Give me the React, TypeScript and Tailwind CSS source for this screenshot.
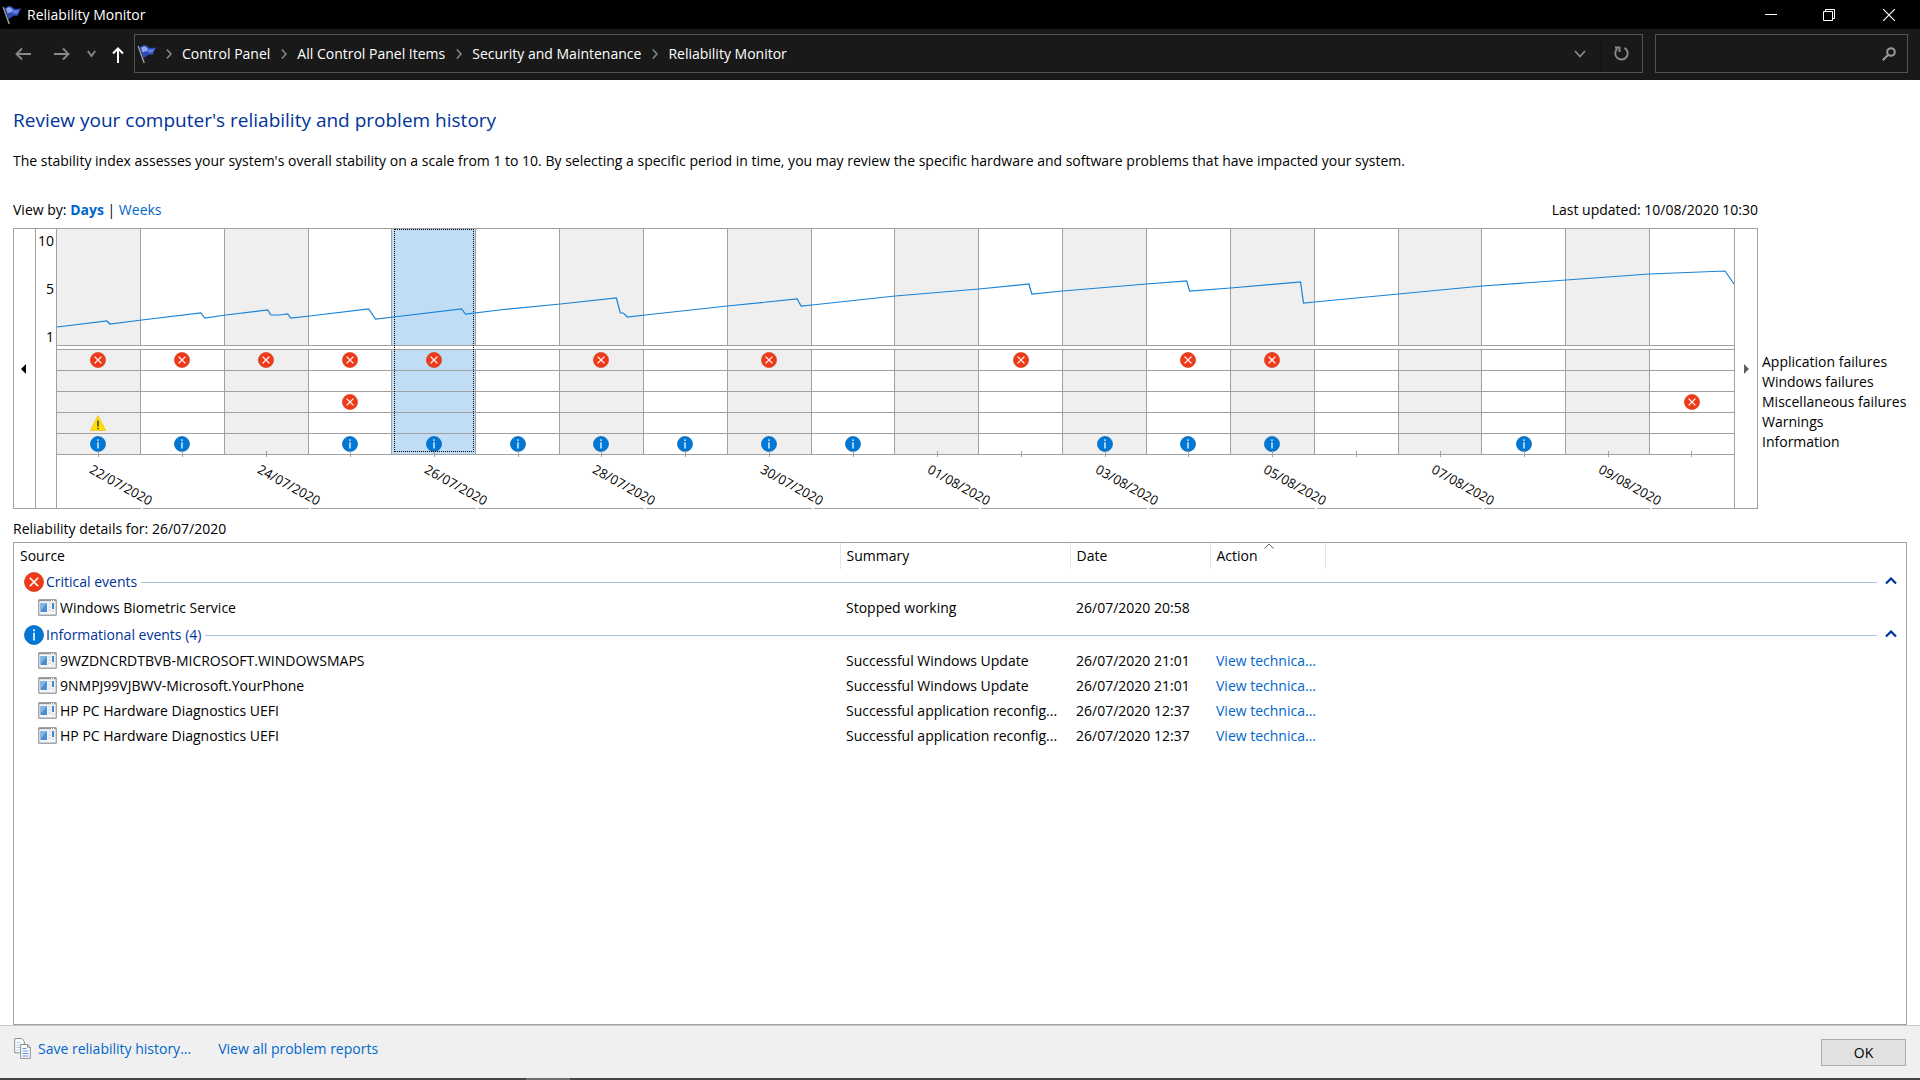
import { Fragment, useState } from "react";
import clsx from "clsx";

interface IDay {
  date: string;
  app?: boolean;
  misc?: boolean;
  warning?: boolean;
  info?: boolean;
}

interface IEvent {
  source: string;
  summary: string;
  date: string;
  action?: string;
}

interface IGroup {
  title: string;
  kind: "error" | "info";
  events: IEvent[];
}

// Data

const CRUMBS = [
  "Control Panel",
  "All Control Panel Items",
  "Security and Maintenance",
  "Reliability Monitor",
];

const LEGEND = [
  "Application failures",
  "Windows failures",
  "Miscellaneous failures",
  "Warnings",
  "Information",
];

const DAYS: IDay[] = [
  { date: "22/07/2020", app: true, warning: true, info: true },
  { date: "23/07/2020", app: true, info: true },
  { date: "24/07/2020", app: true },
  { date: "25/07/2020", app: true, misc: true, info: true },
  { date: "26/07/2020", app: true, info: true },
  { date: "27/07/2020", info: true },
  { date: "28/07/2020", app: true, info: true },
  { date: "29/07/2020", info: true },
  { date: "30/07/2020", app: true, info: true },
  { date: "31/07/2020", info: true },
  { date: "01/08/2020" },
  { date: "02/08/2020", app: true },
  { date: "03/08/2020", info: true },
  { date: "04/08/2020", app: true, info: true },
  { date: "05/08/2020", app: true, info: true },
  { date: "06/08/2020" },
  { date: "07/08/2020" },
  { date: "08/08/2020", info: true },
  { date: "09/08/2020" },
  { date: "10/08/2020", misc: true },
];

const GROUPS: IGroup[] = [
  {
    title: "Critical events",
    kind: "error",
    events: [
      {
        source: "Windows Biometric Service",
        summary: "Stopped working",
        date: "26/07/2020 20:58",
      },
    ],
  },
  {
    title: "Informational events (4)",
    kind: "info",
    events: [
      {
        source: "9WZDNCRDTBVB-MICROSOFT.WINDOWSMAPS",
        summary: "Successful Windows Update",
        date: "26/07/2020 21:01",
        action: "View technica...",
      },
      {
        source: "9NMPJ99VJBWV-Microsoft.YourPhone",
        summary: "Successful Windows Update",
        date: "26/07/2020 21:01",
        action: "View technica...",
      },
      {
        source: "HP PC Hardware Diagnostics UEFI",
        summary: "Successful application reconfig...",
        date: "26/07/2020 12:37",
        action: "View technica...",
      },
      {
        source: "HP PC Hardware Diagnostics UEFI",
        summary: "Successful application reconfig...",
        date: "26/07/2020 12:37",
        action: "View technica...",
      },
    ],
  },
];

// stability index, 84 units per day
const STABILITY =
  "0,98 50,92 53,95 85,91 144,84 148,89 169,86 211,81 214,86 223,86 231,85 234,89 253,87 312,80 319,90 337,88 405,80 409,85 443,81 504,75 560,69 564,84 567,84 571,88 589,86 671,77 741,70 745,77 756,76 839,67 923,60 973,55 976,65 1007,62 1091,55 1131,52 1134,62 1175,59 1245,53 1248,74 1259,73 1343,65 1427,57 1511,51 1594,45 1670,42 1679,55";

// Icons

const FlagIcon = () => (
  <svg viewBox="0 0 20 20" className="size-5 shrink-0" aria-hidden="true">
    <path d="M1.200 2 7.200 19" stroke="#9a9a9a" strokeWidth="1.500" />
    <path
      d="M2.600 3.200C4.500 2.600 5.500 1.200 7.500 1 10 .8 11 3.600 13.500 4 15.500 4.300 17.500 3.500 19.600 3.600 17.600 5.400 17 7.500 16 10.400 14.500 11.200 13 10.400 11.500 11 9.500 11.800 8.500 13.600 6.200 13.800Z"
      fill="#2e4bb5"
    />
    <path
      d="M4 3.800C5.500 3.200 6.500 2 8 2.400 9.500 2.800 10 4.200 11 4.800L10 7.500C8.500 7 7 8 5.600 8.600Z"
      fill="#8ba6f2"
    />
    <path d="M11.500 5C13.500 5.800 15.500 5.200 17.500 4.800 16.500 6 16 7 15.500 8.500 13.500 9 12.500 8.200 10.800 8.600Z" fill="#5f80ea" />
  </svg>
);

const ErrorIcon = ({ className }: { className?: string }) => (
  <svg viewBox="0 0 16 16" className={className} aria-hidden="true">
    <circle cx="8" cy="8" r="7.600" fill="#f03a17" stroke="#c43a20" strokeWidth=".6" />
    <path d="m4.600 4.600 6.800 6.800m0-6.800-6.800 6.800" stroke="#fff" strokeWidth="1.300" />
  </svg>
);

const InfoIcon = ({ className }: { className?: string }) => (
  <svg viewBox="0 0 16 16" className={className} aria-hidden="true">
    <circle cx="8" cy="8" r="7.600" fill="#0078d7" stroke="#0a5fa8" strokeWidth=".6" />
    <path d="M8 6.200v6.200M8 3.300v1.700" stroke="#fff" strokeWidth="1.300" />
  </svg>
);

const WarningIcon = ({ className }: { className?: string }) => (
  <svg viewBox="0 0 16 16" className={className} aria-hidden="true">
    <path d="M8 .6 15.600 15.600H.4Z" fill="#ffe100" stroke="#f8bd1c" strokeWidth=".8" />
    <path d="M8 5.500v6M8 12.700v1.500" stroke="#222" strokeWidth="1.300" />
  </svg>
);

const ProgramIcon = () => (
  <svg viewBox="0 0 19 17" className="h-[17px] w-[19px] shrink-0" aria-hidden="true">
    <rect x=".7" y=".7" width="17.600" height="15.600" rx=".8" fill="#f4f5f7" stroke="#a3a6ab" strokeWidth="1.400" />
    <path d="M1 1.500h17" stroke="#8f949b" strokeWidth="1.400" />
    <path d="M13 1.500h1m1 0h1" stroke="#fff" />
    <rect x="2.500" y="4" width="6.500" height="9" fill="#4a8fd0" />
    <path d="M2.500 12 9 4H2.500Z" fill="#7fb5e4" />
    <path d="M10.500 5h2.500m-2.500 3h2.500m-2.500 3h2.500m1 1h2" stroke="#c9ccd1" />
    <rect x="14" y="4" width="2" height="6" fill="#3f86cf" />
  </svg>
);

const CopyIcon = () => (
  <svg viewBox="0 0 17 21" className="h-[21px] w-[17px] shrink-0" aria-hidden="true">
    <path d="M.7.600h7l2.600 2.600v11.600H.7Z" fill="#fff" stroke="#8c8c8c" />
    <path d="M2.500 4.500h4m-4 2.500h5m-5 2.500h5m-5 2.500h5" stroke="#a9c8f5" />
    <path d="M6.700 6.500h7l2.600 2.600v11.300H6.700Z" fill="#fff" stroke="#8c8c8c" />
    <path d="M13.500 6.500v2.800h2.800" fill="none" stroke="#8c8c8c" />
    <path d="M8.500 10.500h4m-4 2.500h6m-6 2.500h6m-6 2.500h6" stroke="#5b8fe6" />
  </svg>
);

const TitleBar = () => (
  <header className="flex h-[29px] items-center bg-black text-white">
    <div className="flex flex-1 items-center gap-[5px] pl-0.5">
      <FlagIcon />
      <h1>Reliability Monitor</h1>
    </div>
    <button type="button" aria-label="Minimize" className="flex h-full w-[58px] items-center justify-center">
      <svg viewBox="0 0 12 12" className="size-3" stroke="#fff">
        <path d="M0 5.500h12" />
      </svg>
    </button>
    <button type="button" aria-label="Restore" className="flex h-full w-[58px] items-center justify-center">
      <svg viewBox="0 0 12 12" className="size-3" stroke="#fff" fill="none">
        <path d="M.5 2.500h9v9h-9zM2.500 2.500v-2h9v9h-2" />
      </svg>
    </button>
    <button type="button" aria-label="Close" className="flex h-full w-[62px] items-center justify-center">
      <svg viewBox="0 0 12 12" className="size-3" stroke="#fff" strokeWidth="1.200">
        <path d="m0 0 12 12M12 0 0 12" />
      </svg>
    </button>
  </header>
);

const AddressBar = () => (
  <nav className="flex h-[51px] items-start bg-[#191919] pt-[5px] pr-3 text-white">
    <div className="flex h-[39px] w-[134px] shrink-0 items-center pl-[15px]">
      <button type="button" aria-label="Back" className="w-[39px]">
        <svg viewBox="0 0 16 14" className="h-3.5 w-4" fill="none" stroke="#8a8a8a" strokeWidth="1.800">
          <path d="M16 7H1.500M7 1.500 1.500 7 7 12.500" />
        </svg>
      </button>
      <button type="button" aria-label="Forward" className="w-[33px]">
        <svg viewBox="0 0 16 14" className="h-3.5 w-4" fill="none" stroke="#8a8a8a" strokeWidth="1.800">
          <path d="M0 7h14.500M9 1.500 14.500 7 9 12.500" />
        </svg>
      </button>
      <button type="button" aria-label="Recent locations" className="w-[25px]">
        <svg viewBox="0 0 9 8" className="h-2 w-[9px]" fill="none" stroke="#8a8a8a" strokeWidth="1.800">
          <path d="m.8 1 3.700 5L8.200 1" />
        </svg>
      </button>
      <button type="button" aria-label="Up">
        <svg viewBox="0 0 12 16" className="mt-0.5 h-4 w-3" fill="none" stroke="#fff" strokeWidth="2">
          <path d="M6 16V1.500M1 6.500l5-5 5 5" />
        </svg>
      </button>
    </div>
    <div className="flex h-[39px] flex-1 items-center border border-[#535353] pl-0.5">
      <FlagIcon />
      <ol className="-ml-0.5 flex flex-1 items-center">
        {CRUMBS.map((crumb) => (
          <li key={crumb} className="flex items-center">
            <svg viewBox="0 0 6 10" className="mr-[10px] ml-[11px] h-2.5 w-1.5" fill="none" stroke="#8a8a8a" strokeWidth="1.500">
              <path d="m.8.600 4.200 4.400L.8 9.400" />
            </svg>
            <a href="#">{crumb}</a>
          </li>
        ))}
      </ol>
      <button type="button" aria-label="Previous locations" className="flex h-full w-[41px] items-center justify-center">
        <svg viewBox="0 0 12 8" className="h-2 w-3" fill="none" stroke="#8a8a8a" strokeWidth="1.800">
          <path d="m1 1 5 5.500L11 1" />
        </svg>
      </button>
      <button type="button" aria-label="Refresh" className="flex h-full w-[42px] items-center justify-center border-l border-[#141414]">
        <svg viewBox="0 0 15 15" className="size-[15px]" fill="none" stroke="#8a8a8a" strokeWidth="1.900">
          <path d="M10.500 1.900a6.200 6.200 0 1 1-7.300.9M1 1.500h4.500v4.500" />
        </svg>
      </button>
    </div>
    <label className="ml-3 flex h-[39px] w-[253px] items-center border border-[#535353] pr-[11px]">
      <input type="search" aria-label="Search" className="w-full flex-1 bg-transparent px-2 outline-none" />
      <svg viewBox="0 0 14 14" className="size-3.5" fill="none" stroke="#9a9a9a" strokeWidth="2">
        <circle cx="9" cy="5" r="3.800" />
        <path d="M6.200 7.800.7 13.300" />
      </svg>
    </label>
  </nav>
);

const Cell = ({ children }: { children?: React.ReactNode }) => (
  <span className="flex h-[21px] items-center justify-center border-t border-[#a0a0a0] pb-px">
    {children}
  </span>
);

const Chart = ({
  selected,
  onSelect,
}: {
  selected: string;
  onSelect: (date: string) => void;
}) => (
  <div className="flex h-[281px] min-w-0 flex-1 border border-[#a0a0a0]">
    <button
      type="button"
      aria-label="Earlier"
      className="flex w-[22px] items-center justify-center border-r border-[#a0a0a0] pr-0.5"
    >
      <svg viewBox="0 0 5 10" className="h-2.5 w-[5px]">
        <path d="M5 0v10L0 5Z" />
      </svg>
    </button>
    <div className="flex h-[118px] w-5 flex-col justify-between pt-0.5 pr-0.5 text-right leading-5">
      <span>10</span>
      <span>5</span>
      <span>1</span>
    </div>
    <div className="relative flex min-w-0 flex-1 border-x border-[#a0a0a0]">
      {DAYS.map((day, indx) => {
        const active = day.date === selected;
        const shade = active
          ? "bg-[#c0ddf5]"
          : indx % 2 === 0
            ? "bg-[#efefef]"
            : "bg-white";

        return (
          <div key={day.date} className="relative flex min-w-0 flex-1 flex-col">
            <button
              type="button"
              aria-label={day.date}
              aria-pressed={active}
              onClick={() => onSelect(day.date)}
              className="relative flex flex-col border-b border-[#a0a0a0]"
            >
              <span
                className={clsx(
                  "block h-[117px] w-full border-b border-[#a0a0a0]",
                  indx < DAYS.length - 1 && "border-r",
                  shade
                )}
              />
              <span className="block h-[3px] w-full bg-white" />
              <span
                className={clsx(
                  "block w-full border-[#a0a0a0]",
                  indx < DAYS.length - 1 && "border-r",
                  shade
                )}
              >
                <Cell>{day.app && <ErrorIcon className="size-4" />}</Cell>
                <Cell />
                <Cell>{day.misc && <ErrorIcon className="size-4" />}</Cell>
                <Cell>{day.warning && <WarningIcon className="size-4" />}</Cell>
                <Cell>{day.info && <InfoIcon className="size-4" />}</Cell>
              </span>
              {active && (
                <span className="absolute inset-x-0.5 top-0 bottom-0.5 border border-dotted border-black" />
              )}
            </button>
            <span className="relative mx-auto -mt-1 h-1.5 w-px bg-[#a0a0a0]" />
            {indx % 2 === 0 && (
              <>
                <span className="absolute top-[229px] left-[34px] origin-left rotate-[29deg] text-[13px] leading-5 whitespace-nowrap">
                  {day.date}
                </span>
                <span className="absolute -right-0.5 -bottom-px h-px w-0.5 bg-white" />
              </>
            )}
          </div>
        );
      })}
      <svg
        viewBox="0 0 1679 117"
        preserveAspectRatio="none"
        className="pointer-events-none absolute top-0 left-0 h-[117px] w-full"
        aria-hidden="true"
      >
        <polyline
          points={STABILITY}
          fill="none"
          stroke="#1883d7"
          strokeWidth="1.200"
          vectorEffect="non-scaling-stroke"
        />
      </svg>
    </div>
    <button type="button" aria-label="Later" className="flex w-[22px] items-center justify-center">
      <svg viewBox="0 0 5 10" className="h-2.5 w-[5px]" fill="#606060">
        <path d="M0 0v10l5-5Z" />
      </svg>
    </button>
  </div>
);

const GroupRow = ({ title, kind }: { title: string; kind: IGroup["kind"] }) => (
  <th colSpan={5} scope="colgroup" className="p-0 font-normal">
    <div className="flex h-[26px] items-center pr-[9px] pl-2.5 text-[#003399]">
      {kind === "error" ? (
        <ErrorIcon className="size-5 shrink-0" />
      ) : (
        <InfoIcon className="size-5 shrink-0" />
      )}
      <span className="ml-0.5">{title}</span>
      <span className="mr-2 ml-1 h-px flex-1 bg-[#b0bfe0]" />
      <button type="button" aria-label={`Collapse ${title}`} className="flex pb-[3px]">
        <svg viewBox="0 0 12 8" className="h-2 w-3" fill="none" stroke="#003399" strokeWidth="2.200">
          <path d="m1 6.500 5-5 5 5" />
        </svg>
      </button>
    </div>
  </th>
);

const Details = () => (
  <div className="flex-1 border border-[#a0a0a0]">
    <table className="w-full table-fixed border-collapse text-left leading-5">
      <colgroup>
        <col className="w-[826px]" />
        <col className="w-[230px]" />
        <col className="w-[140px]" />
        <col className="w-[115px]" />
        <col />
      </colgroup>
      <thead>
        <tr className="h-[26px]">
          <th className="border-r border-[#e5e5e5] p-0 pl-1.5 font-normal">Source</th>
          <th className="border-r border-[#e5e5e5] p-0 pl-1.5 font-normal">Summary</th>
          <th className="border-r border-[#e5e5e5] p-0 pl-1.5 font-normal">Date</th>
          <th aria-sort="ascending" className="relative border-r border-[#e5e5e5] p-0 pl-1.5 font-normal">
            Action
            <svg viewBox="0 0 10 6" className="absolute top-0 left-1/2 -ml-1 h-1.5 w-2.5" fill="none" stroke="#606060">
              <path d="m.5 5.500 4.500-4.500 4.500 4.500" />
            </svg>
          </th>
          <td />
        </tr>
      </thead>
      <tbody>
        {GROUPS.map((group, indx) => (
          <Fragment key={group.title}>
            {indx > 0 && <tr className="h-0.5" />}
            <tr>
              <GroupRow title={group.title} kind={group.kind} />
            </tr>
            {group.events.map((event, i) => (
              <tr key={i} className="h-[25px]">
                <td className="p-0 pl-6">
                  <div className="flex items-center gap-[3px]">
                    <ProgramIcon />
                    {event.source}
                  </div>
                </td>
                <td className="p-0 pl-1.5 whitespace-nowrap">{event.summary}</td>
                <td className="p-0 pl-1.5 whitespace-nowrap">{event.date}</td>
                <td className="p-0 pl-1.5 whitespace-nowrap">
                  {event.action && (
                    <a href="#" className="text-[#0066cc]">
                      {event.action}
                    </a>
                  )}
                </td>
                <td />
              </tr>
            ))}
          </Fragment>
        ))}
      </tbody>
    </table>
  </div>
);

const App = () => {
  const [selected, setSelected] = useState<string>("26/07/2020");

  return (
    <div className="flex min-h-screen flex-col bg-white font-['Open_Sans','Noto_Sans',sans-serif] text-[14px] leading-5 text-black">
      <TitleBar />
      <AddressBar />

      <main className="flex flex-1 flex-col px-[13px] pt-7">
        <h2 className="text-[19px] leading-6 text-[#003399]">
          Review your computer's reliability and problem history
        </h2>
        <p className="mt-[19px]">
          The stability index assesses your system's overall stability on a scale from 1 to 10. By
          selecting a specific period in time, you may review the specific hardware and software
          problems that have impacted your system.
        </p>

        <div className="mt-[29px] flex">
          <div className="flex flex-1 justify-between pb-2">
            <p>
              View by:{" "}
              <a href="#" className="font-bold text-[#0066cc]">
                Days
              </a>{" "}
              |{" "}
              <a href="#" className="text-[#0066cc]">
                Weeks
              </a>
            </p>
            <p>Last updated: 10/08/2020 10:30</p>
          </div>
          <div className="w-[149px]" />
        </div>

        <div className="flex">
          <Chart selected={selected} onSelect={setSelected} />
          <ul className="w-[149px] shrink-0 pt-[124px] pl-1 whitespace-nowrap">
            {LEGEND.map((item) => (
              <li key={item}>{item}</li>
            ))}
          </ul>
        </div>

        <p className="mt-[10px] mb-[3px]">Reliability details for: {selected}</p>
        <Details />
      </main>

      <footer className="flex h-[53px] items-start border-t border-[#c8c8c8] bg-[#f0f0f0] pr-3.5 pl-3.5">
        <div className="flex flex-1 items-center gap-[7px] pt-3">
          <CopyIcon />
          <a href="#" className="text-[#0066cc]">
            Save reliability history...
          </a>
          <a href="#" className="ml-5 text-[#0066cc]">
            View all problem reports
          </a>
        </div>
        <button type="button" className="mt-[13px] h-[27px] w-[85px] border border-[#adadad] bg-[#e1e1e1]">
          OK
        </button>
      </footer>
      <div className="flex h-0.5 bg-[#444]">
        <span className="ml-[526px] w-11 bg-[#6e6e6e]" />
      </div>
    </div>
  );
};

export default App;
